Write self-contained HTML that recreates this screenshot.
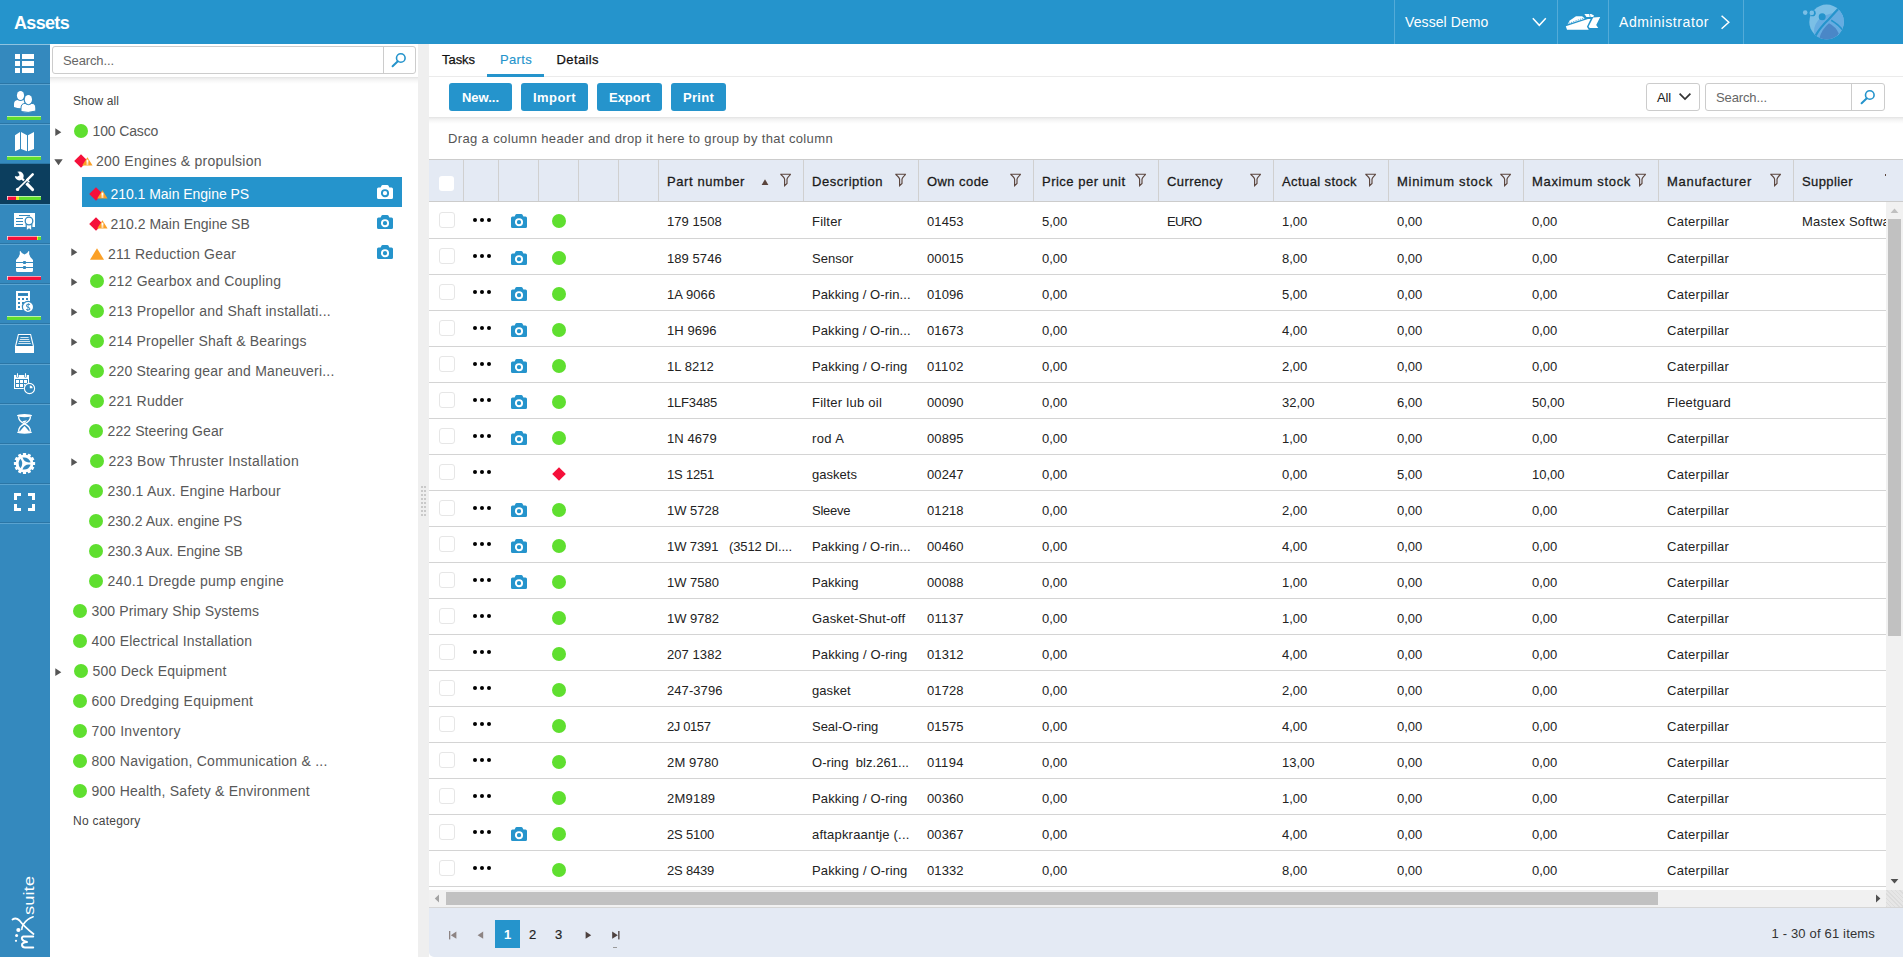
<!DOCTYPE html><html><head><meta charset="utf-8"><title>Assets</title><style>html,body{margin:0;padding:0}body{width:1903px;height:957px;overflow:hidden;position:relative;background:#fff;font-family:"Liberation Sans",sans-serif}
body div,body svg,body span.t{position:absolute;display:block}
span.t{white-space:pre;}</style></head><body><div style="left:0px;top:0px;width:1903px;height:44px;background:#2594cc"></div><span class="t" style="left:14px;top:9.26px;height:29px;line-height:29px;font-size:18px;color:#fff;font-weight:bold;letter-spacing:-0.674px;">Assets</span><div style="left:1394px;top:0px;width:1px;height:44px;background:#53abd8"></div><div style="left:1557px;top:0px;width:1px;height:44px;background:#53abd8"></div><div style="left:1608px;top:0px;width:1px;height:44px;background:#53abd8"></div><div style="left:1743px;top:0px;width:1px;height:44px;background:#53abd8"></div><span class="t" style="left:1405px;top:11.15px;height:22px;line-height:22px;font-size:14px;color:#fff;letter-spacing:0.092px;">Vessel Demo</span><svg style="left:1531px;top:16px;" width="17" height="12" viewBox="0 0 17 12"><path d="M1.8 2.2 L8.3 9.3 L14.8 2.2" fill="none" stroke="#fff" stroke-width="1.5"/></svg><svg style="left:1560px;top:8px;" width="46" height="28" viewBox="0 0 46 28"><path d="M5.8 18.2 L28.0 10.9 L30.6 10.9 L26.9 18.8 L28.8 21.8 L7.0 21.8Z" fill="#fff"/><path d="M7.6 16.2 L9.8 12.5 L16.0 8.2 L22.0 8.2 L24.2 9.8 L24.6 10.8Z" fill="#fff"/><path d="M24.4 6.0 L31.2 6.0 L34.0 7.4 L33.2 8.9 L26.4 8.9Z" fill="#fff"/><path d="M33.2 9.4 L40.2 9.0 L36.2 17.0 L38.2 20.0 L29.6 20.0 L28.6 18.6Z" fill="#fff"/><path d="M8.599999999999909 15.399999999999999 L25 9.600000000000001" stroke="#2594cc" stroke-width="1" stroke-dasharray="1.3 1.1" fill="none" opacity="0.75"/><path d="M29.40000000000009 6 L30.200000000000045 9" stroke="#2594cc" stroke-width="0.8" opacity="0.8"/></svg><span class="t" style="left:1619px;top:11.15px;height:22px;line-height:22px;font-size:14px;color:#fff;letter-spacing:0.579px;">Administrator</span><svg style="left:1719px;top:14px;" width="13" height="17" viewBox="0 0 13 17"><path d="M2.6 1.8 L9.8 8.3 L2.6 14.8" fill="none" stroke="#fff" stroke-width="1.5"/></svg><svg style="left:1798px;top:2px;" width="60" height="42" viewBox="0 0 60 42"><defs><clipPath id="lc"><circle cx="28.59999999999991" cy="19.9" r="17.3"/></clipPath></defs><g clip-path="url(#lc)"><rect x="0" y="0" width="60" height="42" fill="#7bbfe6"/><path d="M41.0 6.0 Q26.0 17.0 17.0 34.0 L17.0 43.0 L52.0 43.0 L52.0 2.0Z" fill="#66ace1"/><path d="M16.6 33.0 Q14.5 25.5 20.0 18.5 Q26.0 12.5 37.0 10.8 L41.0 6.0 Q26.0 17.0 17.0 34.0Z" fill="#66ace1"/><path d="M31.0 21.3 Q38.0 25.0 40.8 31.5 Q36.0 39.0 28.0 38.0 Q24.0 37.8 21.3 36.2 Q24.0 27.0 31.0 21.3Z" fill="#4a87c7"/><path d="M40.8 6.2 Q36.0 11.5 30.5 17.5 Q22.0 25.5 17.2 34.2" stroke="#2594cc" stroke-width="2.2" fill="none"/><path d="M33.2 18.2 Q40.0 22.0 45.8 29.2" stroke="#2594cc" stroke-width="1.7" fill="none"/><circle cx="24.2" cy="14.7" r="3.5" fill="#2594cc"/><circle cx="14.6" cy="11.2" r="3.1" fill="#2594cc"/></g><circle cx="7.2" cy="10.6" r="2.3" fill="#7bbfe6"/><circle cx="13.8" cy="10.9" r="2.3" fill="#7bbfe6"/></svg><div style="left:0px;top:44px;width:50px;height:913px;background:#3489be"></div><div style="left:0px;top:164px;width:50px;height:40px;background:#0c3e5e"></div><div style="left:0px;top:44px;width:50px;height:1px;background:#8fc3e0"></div><div style="left:0px;top:83px;width:50px;height:1px;background:#2b76a6"></div><div style="left:0px;top:84px;width:50px;height:1px;background:#5aa3d0"></div><div style="left:0px;top:123px;width:50px;height:1px;background:#2b76a6"></div><div style="left:0px;top:124px;width:50px;height:1px;background:#5aa3d0"></div><div style="left:0px;top:163px;width:50px;height:1px;background:#2b76a6"></div><div style="left:0px;top:204px;width:50px;height:1px;background:#5aa3d0"></div><div style="left:0px;top:243px;width:50px;height:1px;background:#2b76a6"></div><div style="left:0px;top:244px;width:50px;height:1px;background:#5aa3d0"></div><div style="left:0px;top:283px;width:50px;height:1px;background:#2b76a6"></div><div style="left:0px;top:284px;width:50px;height:1px;background:#5aa3d0"></div><div style="left:0px;top:323px;width:50px;height:1px;background:#2b76a6"></div><div style="left:0px;top:324px;width:50px;height:1px;background:#5aa3d0"></div><div style="left:0px;top:363px;width:50px;height:1px;background:#2b76a6"></div><div style="left:0px;top:364px;width:50px;height:1px;background:#5aa3d0"></div><div style="left:0px;top:403px;width:50px;height:1px;background:#2b76a6"></div><div style="left:0px;top:404px;width:50px;height:1px;background:#5aa3d0"></div><div style="left:0px;top:443px;width:50px;height:1px;background:#2b76a6"></div><div style="left:0px;top:444px;width:50px;height:1px;background:#5aa3d0"></div><div style="left:0px;top:483px;width:50px;height:1px;background:#2b76a6"></div><div style="left:0px;top:484px;width:50px;height:1px;background:#5aa3d0"></div><div style="left:0px;top:522px;width:50px;height:1px;background:#2b76a6"></div><div style="left:0px;top:523px;width:50px;height:1px;background:#5aa3d0"></div><svg style="left:0px;top:44px;" width="50" height="480" viewBox="0 0 50 480"><rect x="15" y="10" width="5" height="5" fill="#fff"/><rect x="22" y="10" width="12" height="5" fill="#fff"/><rect x="15" y="17" width="5" height="5" fill="#fff"/><rect x="22" y="17" width="12" height="5" fill="#fff"/><rect x="15" y="24" width="5" height="5" fill="#fff"/><rect x="22" y="24" width="12" height="5" fill="#fff"/><path d="M14 63 L14 60 Q14 56.5 17.5 56 Q20.5 58 23.5 56 L25 56.400000000000006 L25 64 Q19 65 14 63Z" fill="#fff"/><ellipse cx="20.5" cy="51.5" rx="3.6" ry="4.6" fill="#fff"/><ellipse cx="28.4" cy="55.599999999999994" rx="4.8" ry="5.8" fill="#3489be"/><path d="M21 67.5 L21 64 Q21 59.5 25 59.400000000000006 Q28.4 62 31.8 59.400000000000006 Q35.8 59.5 35.8 64 L35.8 67 Q28 69.5 21 67.5Z" fill="#fff" stroke="#3489be" stroke-width="1"/><ellipse cx="28.4" cy="55.599999999999994" rx="3.6" ry="4.6" fill="#fff"/><path d="M15 91.19999999999999 L20 88 L20 105 L15 107.19999999999999Z M21 88 L27 91.19999999999999 L27 107.19999999999999 L21 105Z M28 91.19999999999999 L34 88 L34 105 L28 107.19999999999999Z" fill="#fff"/><path d="M21 133.5 L25.2 137.8" stroke="#fff" stroke-width="2.2"/><path d="M27 139.8 L32.5 145.5" stroke="#fff" stroke-width="3.2" stroke-linecap="round"/><path d="M31 132 L19.5 143.5" stroke="#0c3e5e" stroke-width="3.6"/><path d="M32.7 130.3 L27.2 135.8" stroke="#fff" stroke-width="2.5" stroke-linecap="round"/><path d="M28.5 134.5 L17.8 145.2" stroke="#fff" stroke-width="1.7"/><circle cx="17.6" cy="145.4" r="1.7" fill="#fff"/><path d="M26.6 135.4 L29.4 138.2" stroke="#fff" stroke-width="1.4"/><circle cx="19.3" cy="132" r="4.4" fill="#fff"/><path d="M13.5 127.5 L18.2 128.2 L19.6 131.2 L17.6 132.6 L14.2 132 Z" fill="#0c3e5e"/><rect x="14" y="169" width="21" height="14" fill="#fff"/><rect x="19" y="171" width="11" height="1" fill="#3489be"/><rect x="16" y="174" width="7" height="1" fill="#3489be"/><rect x="16" y="177" width="7" height="1" fill="#3489be"/><rect x="16" y="180" width="7" height="1" fill="#3489be"/><path d="M26.2 180 L26.2 187 L29 185 L31.8 187 L31.8 180Z" fill="#fff" stroke="#3489be" stroke-width="1.2"/><circle cx="29" cy="177" r="3.8" fill="#fff" stroke="#3489be" stroke-width="1.3"/><path d="M20.4 207 Q19.4 207.4 19.8 208.4 Q20.4 212 16 216 L16 226.5 Q16 228 17.5 228 L31.5 228 Q33 228 33 226.5 L33 216 Q28.6 212 29.2 208.4 Q29.6 207.4 28.6 207 Q27 210.2 24.5 210.4 Q22 210.2 20.4 207Z" fill="#fff"/><rect x="16" y="218" width="17" height="1" fill="#3489be"/><rect x="16" y="223" width="17" height="1" fill="#3489be"/><rect x="23" y="217" width="3" height="3" rx="0.8" fill="#3489be"/><rect x="23" y="222" width="3" height="3" rx="0.8" fill="#3489be"/><rect x="16" y="247" width="14" height="19" fill="#fff"/><rect x="18" y="249" width="10" height="3" fill="#3489be"/><rect x="19" y="250" width="8" height="1" fill="#2f7fb4"/><rect x="18" y="254" width="2" height="2" fill="#3489be"/><rect x="22" y="254" width="2" height="2" fill="#3489be"/><rect x="26" y="254" width="2" height="2" fill="#3489be"/><rect x="18" y="258" width="2" height="2" fill="#3489be"/><rect x="22" y="258" width="2" height="2" fill="#3489be"/><rect x="26" y="258" width="2" height="2" fill="#3489be"/><rect x="18" y="262" width="2" height="2" fill="#3489be"/><rect x="22" y="262" width="2" height="2" fill="#3489be"/><rect x="26" y="262" width="2" height="2" fill="#3489be"/><circle cx="28" cy="263" r="5.6" fill="#fff" stroke="#3489be" stroke-width="1.2"/><path d="M30 260.6 Q27.2 259.6 26.6 261.4 Q26.4 262.6 28.2 263.2 Q30.2 263.9 29.8 265.3 Q29 266.6 26.2 265.6" stroke="#3489be" stroke-width="1.1" fill="none"/><path d="M28.6 259.2 L27.6 267" stroke="#3489be" stroke-width="0.7"/><path d="M18.4 290.5 L30.6 290.5 L33.4 302 L15.6 302Z" fill="none" stroke="#fff" stroke-width="1.1"/><rect x="15" y="302" width="19" height="7" fill="#fff"/><rect x="20.4" y="293.1" width="8.200000000000003" height="0.8" fill="#fff"/><rect x="19.8" y="295.1" width="9.399999999999999" height="0.8" fill="#fff"/><rect x="19" y="297.1" width="11" height="0.8" fill="#fff"/><rect x="18.2" y="299.1" width="12.600000000000001" height="0.8" fill="#fff"/><path d="M19 291 L30 291 L30.4 292.4 L18.6 292.4Z" fill="#2579b0"/><rect x="16.4" y="301" width="16.2" height="1" fill="#2579b0"/><rect x="14" y="331" width="15" height="14" fill="#fff"/><rect x="15" y="335" width="13" height="9" fill="#3489be"/><rect x="16" y="336" width="3" height="3" fill="#fff"/><rect x="20" y="336" width="3" height="3" fill="#fff"/><rect x="24" y="336" width="3" height="3" fill="#fff"/><rect x="16" y="340" width="3" height="3" fill="#fff"/><rect x="20" y="340" width="3" height="3" fill="#fff"/><rect x="24" y="340" width="3" height="3" fill="#fff"/><rect x="16.3" y="328.6" width="2.4" height="5" rx="1.2" fill="#3489be"/><rect x="17.0" y="329" width="1" height="4" rx="0.5" fill="#fff"/><rect x="24.3" y="328.6" width="2.4" height="5" rx="1.2" fill="#3489be"/><rect x="25.0" y="329" width="1" height="4" rx="0.5" fill="#fff"/><circle cx="29.5" cy="344.5" r="5.8" fill="#3489be"/><circle cx="29.5" cy="344.5" r="5.1" fill="none" stroke="#fff" stroke-width="1.1"/><path d="M29.8 344.2 L29.8 341.6 A2.8 2.8 0 0 1 32.6 344.2Z" fill="#fff"/><ellipse cx="24.5" cy="371.6" rx="7.6" ry="1.7" fill="#fff"/><ellipse cx="24.5" cy="388.2" rx="7.6" ry="1.5" fill="#fff"/><path d="M18.6 372.5 Q18.4 377 24.5 379.8 Q30.6 382.5 30.4 387.5" fill="none" stroke="#fff" stroke-width="1.3"/><path d="M30.4 372.5 Q30.6 377 24.5 379.8 Q18.4 382.5 18.6 387.5" fill="none" stroke="#fff" stroke-width="1.3"/><path d="M19.8 387.5 Q22.5 384 24.5 382 Q26.5 384 29.2 387.5Z" fill="#fff"/><path d="M22.2 377.2 L27 376.2 L24.5 379Z" fill="#fff"/><rect x="22.9" y="408.9" width="3.2" height="4" rx="0.5" fill="#fff" transform="rotate(0 24.5 419.5)"/><rect x="22.9" y="408.9" width="3.2" height="4" rx="0.5" fill="#fff" transform="rotate(30 24.5 419.5)"/><rect x="22.9" y="408.9" width="3.2" height="4" rx="0.5" fill="#fff" transform="rotate(60 24.5 419.5)"/><rect x="22.9" y="408.9" width="3.2" height="4" rx="0.5" fill="#fff" transform="rotate(90 24.5 419.5)"/><rect x="22.9" y="408.9" width="3.2" height="4" rx="0.5" fill="#fff" transform="rotate(120 24.5 419.5)"/><rect x="22.9" y="408.9" width="3.2" height="4" rx="0.5" fill="#fff" transform="rotate(150 24.5 419.5)"/><rect x="22.9" y="408.9" width="3.2" height="4" rx="0.5" fill="#fff" transform="rotate(180 24.5 419.5)"/><rect x="22.9" y="408.9" width="3.2" height="4" rx="0.5" fill="#fff" transform="rotate(210 24.5 419.5)"/><rect x="22.9" y="408.9" width="3.2" height="4" rx="0.5" fill="#fff" transform="rotate(240 24.5 419.5)"/><rect x="22.9" y="408.9" width="3.2" height="4" rx="0.5" fill="#fff" transform="rotate(270 24.5 419.5)"/><rect x="22.9" y="408.9" width="3.2" height="4" rx="0.5" fill="#fff" transform="rotate(300 24.5 419.5)"/><rect x="22.9" y="408.9" width="3.2" height="4" rx="0.5" fill="#fff" transform="rotate(330 24.5 419.5)"/><circle cx="24.5" cy="419.5" r="8.9" fill="#fff"/><path d="M20.4 414.8 Q16.6 419.5 20.4 424.2 Q24.3 419.5 20.4 414.8Z" fill="#3489be" transform="rotate(0 24.5 419.5)"/><path d="M20.4 414.8 Q16.6 419.5 20.4 424.2 Q24.3 419.5 20.4 414.8Z" fill="#3489be" transform="rotate(120 24.5 419.5)"/><path d="M20.4 414.8 Q16.6 419.5 20.4 424.2 Q24.3 419.5 20.4 414.8Z" fill="#3489be" transform="rotate(240 24.5 419.5)"/><path d="M14 449 h7 v3 h-4 v4 h-3Z M35 449 h-7 v3 h4 v4 h3Z M14 467 h7 v-3 h-4 v-4 h-3Z M35 467 h-7 v-3 h4 v-4 h3Z" fill="#fff"/></svg><div style="left:7px;top:116px;width:34px;height:4px;background:#5fdf2f"></div><div style="left:7px;top:116px;width:34px;height:1px;background:rgba(255,255,255,0.6)"></div><div style="left:7px;top:156px;width:34px;height:4px;background:#5fdf2f"></div><div style="left:7px;top:156px;width:34px;height:1px;background:rgba(255,255,255,0.6)"></div><div style="left:7px;top:196px;width:9px;height:4px;background:#f5103a"></div><div style="left:16px;top:196px;width:3px;height:4px;background:#f3e61c"></div><div style="left:19px;top:196px;width:22px;height:4px;background:#5fdf2f"></div><div style="left:7px;top:196px;width:34px;height:1px;background:rgba(255,255,255,0.6)"></div><div style="left:7px;top:196px;width:1px;height:4px;background:rgba(255,255,255,0.7)"></div><div style="left:7px;top:236px;width:30px;height:4px;background:#f5103a"></div><div style="left:37px;top:236px;width:1px;height:4px;background:#f3e61c"></div><div style="left:38px;top:236px;width:3px;height:4px;background:#5fdf2f"></div><div style="left:7px;top:236px;width:34px;height:1px;background:rgba(255,255,255,0.6)"></div><div style="left:7px;top:236px;width:1px;height:4px;background:rgba(255,255,255,0.7)"></div><div style="left:7px;top:276px;width:34px;height:4px;background:#f5103a"></div><div style="left:7px;top:276px;width:34px;height:1px;background:rgba(255,255,255,0.6)"></div><div style="left:7px;top:276px;width:1px;height:4px;background:rgba(255,255,255,0.7)"></div><div style="left:7px;top:316px;width:34px;height:4px;background:#5fdf2f"></div><div style="left:7px;top:316px;width:34px;height:1px;background:rgba(255,255,255,0.6)"></div><svg style="left:0;top:0" width="50" height="957" viewBox="0 0 50 957"><text x="0" y="0" transform="translate(34 915) rotate(-90)" font-family="Liberation Sans" font-size="15.5" fill="#fff" textLength="39" lengthAdjust="spacingAndGlyphs" style="font-weight:normal">suite</text><path d="M12.5 919.5 Q16 917 19.5 920.5 Q24 926.5 33.5 934" stroke="#fff" stroke-width="1.8" fill="none" stroke-linecap="round"/><path d="M33.2 916.8 Q27 919 23.6 924 Q21.8 927 21.8 929.5" stroke="#fff" stroke-width="1.5" fill="none" stroke-linecap="round"/><circle cx="18.4" cy="930" r="2.1" fill="#fff"/><circle cx="16.6" cy="935.6" r="1.5" fill="#fff"/><circle cx="16" cy="940.8" r="1.1" fill="#fff"/><path d="M33.2 936.6 L23.4 936.6 Q21.4 937 22 939 Q22.6 941 27 942 Q21.6 942.6 22 945 Q22.4 947.4 25 947.4 L33.2 947.4" stroke="#fff" stroke-width="2" fill="none" stroke-linecap="round" stroke-linejoin="round"/></svg><div style="left:50px;top:44px;width:368px;height:913px;background:#fff"></div><div style="left:52px;top:46px;width:364px;height:28px;border:1px solid #ccc;border-radius:3px;box-sizing:border-box;background:#fff"></div><div style="left:383px;top:47px;width:1px;height:26px;background:#ccc"></div><span class="t" style="left:63px;top:50.00px;height:21px;line-height:21px;font-size:13px;color:#666;letter-spacing:-0.126px;">Search...</span><svg style="left:391px;top:52px;" width="16" height="16" viewBox="0 0 16 16"><circle cx="9.8" cy="6" r="4.3" fill="none" stroke="#2594cc" stroke-width="1.6"/><path d="M6.8 9.2 L1.6 14.2" stroke="#2594cc" stroke-width="2" stroke-linecap="round"/></svg><div style="left:50px;top:77px;width:368px;height:7px;background:linear-gradient(#e1e1e1 0,#ebebeb 15%,#f1f1f1 30%,#f6f6f6 50%,#fbfbfb 75%,#fff 100%)"></div><span class="t" style="left:73px;top:92.34px;height:19px;line-height:19px;font-size:12px;color:#444;letter-spacing:0.080px;">Show all</span><span class="t" style="left:73px;top:812.34px;height:19px;line-height:19px;font-size:12px;color:#444;letter-spacing:0.257px;">No category</span><svg style="left:55px;top:128px;" width="7" height="9" viewBox="0 0 7 9"><path d="M0.3 0.3 L6.3 4.2 L0.3 8.1Z" fill="#555"/></svg><div style="left:74px;top:124px;width:14px;height:14px;background:#5fdf2f;border-radius:50%"></div><span class="t" style="left:92.5px;top:120.15px;height:22px;line-height:22px;font-size:14px;color:#585858;letter-spacing:-0.133px;">100 Casco</span><svg style="left:54px;top:159px;" width="9" height="7" viewBox="0 0 9 7"><path d="M0.3 0.3 L8.7 0.3 L4.5 6.3Z" fill="#555"/></svg><svg style="left:74px;top:154px;" width="14" height="14" viewBox="0 0 14 14"><path d="M7 0.2 L13.8 7 L7 13.8 L0.2 7Z" fill="#f5103a"/></svg><svg style="left:82px;top:157px;" width="11" height="9" viewBox="0 0 11 9"><path d="M5.4 0.3 L10.6 8.4 L0.2 8.4Z" fill="#fba026"/><rect x="4.5" y="2.6" width="1.9" height="3.2" fill="#fff"/><rect x="4.5" y="6.3" width="1.9" height="1.3" fill="#fff"/></svg><span class="t" style="left:96px;top:150.15px;height:22px;line-height:22px;font-size:14px;color:#585858;letter-spacing:0.258px;">200 Engines &amp; propulsion</span><div style="left:82px;top:177px;width:320px;height:30px;background:#2594cc"></div><svg style="left:89px;top:187px;" width="14" height="14" viewBox="0 0 14 14"><path d="M7 0.2 L13.8 7 L7 13.8 L0.2 7Z" fill="#f5103a"/></svg><svg style="left:97px;top:190px;" width="11" height="9" viewBox="0 0 11 9"><path d="M5.4 0.3 L10.6 8.4 L0.2 8.4Z" fill="#fba026"/><rect x="4.5" y="2.6" width="1.9" height="3.2" fill="#fff"/><rect x="4.5" y="6.3" width="1.9" height="1.3" fill="#fff"/></svg><span class="t" style="left:110.5px;top:183.15px;height:22px;line-height:22px;font-size:14px;color:#fff;letter-spacing:-0.033px;">210.1 Main Engine PS</span><svg style="left:377px;top:185px;" width="16" height="14" viewBox="0 0 16 14"><path d="M1.5 2.6 L3.6 2.6 L4.6 0.6 Q4.9 0 5.6 0 L10.4 0 Q11.1 0 11.4 0.6 L12.4 2.6 L14.5 2.6 Q16 2.6 16 4.1 L16 12.5 Q16 14 14.5 14 L1.5 14 Q0 14 0 12.5 L0 4.1 Q0 2.6 1.5 2.6Z" fill="#fff"/><circle cx="8" cy="8.2" r="3.1" fill="none" stroke="#2594cc" stroke-width="1.9"/></svg><svg style="left:89px;top:217px;" width="14" height="14" viewBox="0 0 14 14"><path d="M7 0.2 L13.8 7 L7 13.8 L0.2 7Z" fill="#f5103a"/></svg><svg style="left:97px;top:220px;" width="11" height="9" viewBox="0 0 11 9"><path d="M5.4 0.3 L10.6 8.4 L0.2 8.4Z" fill="#fba026"/><rect x="4.5" y="2.6" width="1.9" height="3.2" fill="#fff"/><rect x="4.5" y="6.3" width="1.9" height="1.3" fill="#fff"/></svg><span class="t" style="left:110.5px;top:213.15px;height:22px;line-height:22px;font-size:14px;color:#585858;letter-spacing:-0.001px;">210.2 Main Engine SB</span><svg style="left:377px;top:215px;" width="16" height="14" viewBox="0 0 16 14"><path d="M1.5 2.6 L3.6 2.6 L4.6 0.6 Q4.9 0 5.6 0 L10.4 0 Q11.1 0 11.4 0.6 L12.4 2.6 L14.5 2.6 Q16 2.6 16 4.1 L16 12.5 Q16 14 14.5 14 L1.5 14 Q0 14 0 12.5 L0 4.1 Q0 2.6 1.5 2.6Z" fill="#2594cc"/><circle cx="8" cy="8.2" r="3.1" fill="none" stroke="#fff" stroke-width="1.9"/></svg><svg style="left:71px;top:248px;" width="7" height="9" viewBox="0 0 7 9"><path d="M0.3 0.3 L6.3 4.2 L0.3 8.1Z" fill="#555"/></svg><svg style="left:90px;top:248px;" width="14" height="12" viewBox="0 0 14 12"><path d="M7 0.3 L14 11.7 L0 11.7Z" fill="#fba026"/></svg><span class="t" style="left:108px;top:243.15px;height:22px;line-height:22px;font-size:14px;color:#585858;letter-spacing:0.211px;">211 Reduction Gear</span><svg style="left:377px;top:245px;" width="16" height="14" viewBox="0 0 16 14"><path d="M1.5 2.6 L3.6 2.6 L4.6 0.6 Q4.9 0 5.6 0 L10.4 0 Q11.1 0 11.4 0.6 L12.4 2.6 L14.5 2.6 Q16 2.6 16 4.1 L16 12.5 Q16 14 14.5 14 L1.5 14 Q0 14 0 12.5 L0 4.1 Q0 2.6 1.5 2.6Z" fill="#2594cc"/><circle cx="8" cy="8.2" r="3.1" fill="none" stroke="#fff" stroke-width="1.9"/></svg><svg style="left:71px;top:278px;" width="7" height="9" viewBox="0 0 7 9"><path d="M0.3 0.3 L6.3 4.2 L0.3 8.1Z" fill="#555"/></svg><div style="left:90px;top:274px;width:14px;height:14px;background:#5fdf2f;border-radius:50%"></div><span class="t" style="left:108.5px;top:270.15px;height:22px;line-height:22px;font-size:14px;color:#585858;letter-spacing:0.225px;">212 Gearbox and Coupling</span><svg style="left:71px;top:308px;" width="7" height="9" viewBox="0 0 7 9"><path d="M0.3 0.3 L6.3 4.2 L0.3 8.1Z" fill="#555"/></svg><div style="left:90px;top:304px;width:14px;height:14px;background:#5fdf2f;border-radius:50%"></div><span class="t" style="left:108.5px;top:300.15px;height:22px;line-height:22px;font-size:14px;color:#585858;letter-spacing:0.250px;">213 Propellor and Shaft installati...</span><svg style="left:71px;top:338px;" width="7" height="9" viewBox="0 0 7 9"><path d="M0.3 0.3 L6.3 4.2 L0.3 8.1Z" fill="#555"/></svg><div style="left:90px;top:334px;width:14px;height:14px;background:#5fdf2f;border-radius:50%"></div><span class="t" style="left:108.5px;top:330.15px;height:22px;line-height:22px;font-size:14px;color:#585858;letter-spacing:0.196px;">214 Propeller Shaft &amp; Bearings</span><svg style="left:71px;top:368px;" width="7" height="9" viewBox="0 0 7 9"><path d="M0.3 0.3 L6.3 4.2 L0.3 8.1Z" fill="#555"/></svg><div style="left:90px;top:364px;width:14px;height:14px;background:#5fdf2f;border-radius:50%"></div><span class="t" style="left:108.5px;top:360.15px;height:22px;line-height:22px;font-size:14px;color:#585858;letter-spacing:0.191px;">220 Stearing gear and Maneuveri...</span><svg style="left:71px;top:398px;" width="7" height="9" viewBox="0 0 7 9"><path d="M0.3 0.3 L6.3 4.2 L0.3 8.1Z" fill="#555"/></svg><div style="left:90px;top:394px;width:14px;height:14px;background:#5fdf2f;border-radius:50%"></div><span class="t" style="left:108.5px;top:390.15px;height:22px;line-height:22px;font-size:14px;color:#585858;letter-spacing:0.208px;">221 Rudder</span><div style="left:89px;top:424px;width:14px;height:14px;background:#5fdf2f;border-radius:50%"></div><span class="t" style="left:107.5px;top:420.15px;height:22px;line-height:22px;font-size:14px;color:#585858;letter-spacing:0.100px;">222 Steering Gear</span><svg style="left:71px;top:458px;" width="7" height="9" viewBox="0 0 7 9"><path d="M0.3 0.3 L6.3 4.2 L0.3 8.1Z" fill="#555"/></svg><div style="left:90px;top:454px;width:14px;height:14px;background:#5fdf2f;border-radius:50%"></div><span class="t" style="left:108.5px;top:450.15px;height:22px;line-height:22px;font-size:14px;color:#585858;letter-spacing:0.326px;">223 Bow Thruster Installation</span><div style="left:89px;top:484px;width:14px;height:14px;background:#5fdf2f;border-radius:50%"></div><span class="t" style="left:107.5px;top:480.15px;height:22px;line-height:22px;font-size:14px;color:#585858;letter-spacing:0.215px;">230.1 Aux. Engine Harbour</span><div style="left:89px;top:514px;width:14px;height:14px;background:#5fdf2f;border-radius:50%"></div><span class="t" style="left:107.5px;top:510.15px;height:22px;line-height:22px;font-size:14px;color:#585858;letter-spacing:0.002px;">230.2 Aux. engine PS</span><div style="left:89px;top:544px;width:14px;height:14px;background:#5fdf2f;border-radius:50%"></div><span class="t" style="left:107.5px;top:540.15px;height:22px;line-height:22px;font-size:14px;color:#585858;letter-spacing:-0.047px;">230.3 Aux. Engine SB</span><div style="left:89px;top:574px;width:14px;height:14px;background:#5fdf2f;border-radius:50%"></div><span class="t" style="left:107.5px;top:570.15px;height:22px;line-height:22px;font-size:14px;color:#585858;letter-spacing:0.285px;">240.1 Dregde pump engine</span><div style="left:73px;top:604px;width:14px;height:14px;background:#5fdf2f;border-radius:50%"></div><span class="t" style="left:91.5px;top:600.15px;height:22px;line-height:22px;font-size:14px;color:#585858;letter-spacing:0.113px;">300 Primary Ship Systems</span><div style="left:73px;top:634px;width:14px;height:14px;background:#5fdf2f;border-radius:50%"></div><span class="t" style="left:91.5px;top:630.15px;height:22px;line-height:22px;font-size:14px;color:#585858;letter-spacing:0.220px;">400 Electrical Installation</span><svg style="left:55px;top:668px;" width="7" height="9" viewBox="0 0 7 9"><path d="M0.3 0.3 L6.3 4.2 L0.3 8.1Z" fill="#555"/></svg><div style="left:74px;top:664px;width:14px;height:14px;background:#5fdf2f;border-radius:50%"></div><span class="t" style="left:92.5px;top:660.15px;height:22px;line-height:22px;font-size:14px;color:#585858;letter-spacing:0.234px;">500 Deck Equipment</span><div style="left:73px;top:694px;width:14px;height:14px;background:#5fdf2f;border-radius:50%"></div><span class="t" style="left:91.5px;top:690.15px;height:22px;line-height:22px;font-size:14px;color:#585858;letter-spacing:0.314px;">600 Dredging Equipment</span><div style="left:73px;top:724px;width:14px;height:14px;background:#5fdf2f;border-radius:50%"></div><span class="t" style="left:91.5px;top:720.15px;height:22px;line-height:22px;font-size:14px;color:#585858;letter-spacing:0.346px;">700 Inventory</span><div style="left:73px;top:754px;width:14px;height:14px;background:#5fdf2f;border-radius:50%"></div><span class="t" style="left:91.5px;top:750.15px;height:22px;line-height:22px;font-size:14px;color:#585858;letter-spacing:0.255px;">800 Navigation, Communication &amp; ...</span><div style="left:73px;top:784px;width:14px;height:14px;background:#5fdf2f;border-radius:50%"></div><span class="t" style="left:91.5px;top:780.15px;height:22px;line-height:22px;font-size:14px;color:#585858;letter-spacing:0.233px;">900 Health, Safety &amp; Environment</span><div style="left:418px;top:44px;width:11px;height:913px;background:#efefef"></div><svg style="left:0;top:0" width="430" height="530" viewBox="0 0 430 530"><rect x="421" y="486" width="2" height="2" fill="#c9c9c9"/><rect x="424" y="486" width="2" height="2" fill="#c9c9c9"/><rect x="421" y="490" width="2" height="2" fill="#c9c9c9"/><rect x="424" y="490" width="2" height="2" fill="#c9c9c9"/><rect x="421" y="494" width="2" height="2" fill="#c9c9c9"/><rect x="424" y="494" width="2" height="2" fill="#c9c9c9"/><rect x="421" y="498" width="2" height="2" fill="#c9c9c9"/><rect x="424" y="498" width="2" height="2" fill="#c9c9c9"/><rect x="421" y="502" width="2" height="2" fill="#c9c9c9"/><rect x="424" y="502" width="2" height="2" fill="#c9c9c9"/><rect x="421" y="506" width="2" height="2" fill="#c9c9c9"/><rect x="424" y="506" width="2" height="2" fill="#c9c9c9"/><rect x="421" y="510" width="2" height="2" fill="#c9c9c9"/><rect x="424" y="510" width="2" height="2" fill="#c9c9c9"/><rect x="421" y="514" width="2" height="2" fill="#c9c9c9"/><rect x="424" y="514" width="2" height="2" fill="#c9c9c9"/></svg><div style="left:429px;top:76px;width:1474px;height:1px;background:#ebebeb"></div><span class="t" style="left:442px;top:49.00px;height:21px;line-height:21px;font-size:13px;color:#111;-webkit-text-stroke:0.25px #111;letter-spacing:-0.047px;">Tasks</span><span class="t" style="left:500px;top:49.00px;height:21px;line-height:21px;font-size:13px;color:#2594cc;-webkit-text-stroke:0.12px #2594cc;letter-spacing:0.331px;">Parts</span><span class="t" style="left:556.5px;top:49.00px;height:21px;line-height:21px;font-size:13px;color:#111;-webkit-text-stroke:0.25px #111;letter-spacing:0.393px;">Details</span><div style="left:487px;top:74px;width:57px;height:3px;background:#2594cc"></div><div style="left:449px;top:83px;width:63px;height:28px;background:#2594cc;border-radius:3px"></div><span class="t" style="left:462px;top:87.00px;height:21px;line-height:21px;font-size:13px;color:#fff;font-weight:bold;letter-spacing:-0.016px;">New...</span><div style="left:521px;top:83px;width:67px;height:28px;background:#2594cc;border-radius:3px"></div><span class="t" style="left:533px;top:87.00px;height:21px;line-height:21px;font-size:13px;color:#fff;font-weight:bold;letter-spacing:0.424px;">Import</span><div style="left:597px;top:83px;width:65px;height:28px;background:#2594cc;border-radius:3px"></div><span class="t" style="left:609px;top:87.00px;height:21px;line-height:21px;font-size:13px;color:#fff;font-weight:bold;letter-spacing:-0.029px;">Export</span><div style="left:671px;top:83px;width:55px;height:28px;background:#2594cc;border-radius:3px"></div><span class="t" style="left:683px;top:87.00px;height:21px;line-height:21px;font-size:13px;color:#fff;font-weight:bold;letter-spacing:0.275px;">Print</span><div style="left:1646px;top:83px;width:54px;height:28px;border:1px solid #ccc;border-radius:3px;box-sizing:border-box;background:#fff"></div><span class="t" style="left:1657px;top:87.00px;height:21px;line-height:21px;font-size:13px;color:#222;letter-spacing:-0.151px;">All</span><svg style="left:1678px;top:91px;" width="14" height="11" viewBox="0 0 14 11"><path d="M1.6 2.6 L7 8 L12.4 2.6" fill="none" stroke="#333" stroke-width="1.7"/></svg><div style="left:1705px;top:83px;width:180px;height:28px;border:1px solid #ccc;border-radius:3px;box-sizing:border-box;background:#fff"></div><div style="left:1851px;top:84px;width:1px;height:26px;background:#ccc"></div><span class="t" style="left:1716px;top:87.00px;height:21px;line-height:21px;font-size:13px;color:#666;letter-spacing:-0.126px;">Search...</span><svg style="left:1860px;top:89px;" width="16" height="16" viewBox="0 0 16 16"><circle cx="9.8" cy="6" r="4.3" fill="none" stroke="#2594cc" stroke-width="1.6"/><path d="M6.8 9.2 L1.6 14.2" stroke="#2594cc" stroke-width="2" stroke-linecap="round"/></svg><div style="left:429px;top:117px;width:1474px;height:7px;background:linear-gradient(#e1e1e1 0,#ebebeb 15%,#f1f1f1 30%,#f6f6f6 50%,#fbfbfb 75%,#fff 100%)"></div><span class="t" style="left:448px;top:128.00px;height:21px;line-height:21px;font-size:13px;color:#555;letter-spacing:0.364px;">Drag a column header and drop it here to group by that column</span><div style="left:429px;top:159px;width:1474px;height:1px;background:#cccccc"></div><div style="left:429px;top:160px;width:1474px;height:41px;background:#e4eaf4"></div><div style="left:429px;top:201px;width:1474px;height:1px;background:#cccccc"></div><div style="left:463px;top:160px;width:1px;height:41px;background:#d0d0d0"></div><div style="left:498px;top:160px;width:1px;height:41px;background:#d0d0d0"></div><div style="left:538px;top:160px;width:1px;height:41px;background:#d0d0d0"></div><div style="left:578px;top:160px;width:1px;height:41px;background:#d0d0d0"></div><div style="left:618px;top:160px;width:1px;height:41px;background:#d0d0d0"></div><div style="left:658px;top:160px;width:1px;height:41px;background:#d0d0d0"></div><div style="left:803px;top:160px;width:1px;height:41px;background:#d0d0d0"></div><div style="left:918px;top:160px;width:1px;height:41px;background:#d0d0d0"></div><div style="left:1033px;top:160px;width:1px;height:41px;background:#d0d0d0"></div><div style="left:1158px;top:160px;width:1px;height:41px;background:#d0d0d0"></div><div style="left:1273px;top:160px;width:1px;height:41px;background:#d0d0d0"></div><div style="left:1388px;top:160px;width:1px;height:41px;background:#d0d0d0"></div><div style="left:1523px;top:160px;width:1px;height:41px;background:#d0d0d0"></div><div style="left:1658px;top:160px;width:1px;height:41px;background:#d0d0d0"></div><div style="left:1793px;top:160px;width:1px;height:41px;background:#d0d0d0"></div><div style="left:439px;top:176px;width:15px;height:15px;background:#fff;border-radius:3px"></div><span class="t" style="left:667px;top:170.50px;height:21px;line-height:21px;font-size:13px;color:#1a1a1a;-webkit-text-stroke:0.28px #1a1a1a;letter-spacing:0.587px;">Part number</span><svg style="left:780px;top:173px;" width="12" height="14" viewBox="0 0 12 14"><path d="M0.3 1.2 L10.9 1.2 M0.6 1.3 Q4.4 4.6 4.6 6.4 L4.6 12.6 L7 10.4 L7 6.4 Q7.2 4.6 10.6 1.3" fill="none" stroke="#5a443c" stroke-width="1.15"/></svg><span class="t" style="left:812px;top:170.50px;height:21px;line-height:21px;font-size:13px;color:#1a1a1a;-webkit-text-stroke:0.28px #1a1a1a;letter-spacing:0.543px;">Description</span><svg style="left:895px;top:173px;" width="12" height="14" viewBox="0 0 12 14"><path d="M0.3 1.2 L10.9 1.2 M0.6 1.3 Q4.4 4.6 4.6 6.4 L4.6 12.6 L7 10.4 L7 6.4 Q7.2 4.6 10.6 1.3" fill="none" stroke="#5a443c" stroke-width="1.15"/></svg><span class="t" style="left:927px;top:170.50px;height:21px;line-height:21px;font-size:13px;color:#1a1a1a;-webkit-text-stroke:0.28px #1a1a1a;letter-spacing:0.432px;">Own code</span><svg style="left:1010px;top:173px;" width="12" height="14" viewBox="0 0 12 14"><path d="M0.3 1.2 L10.9 1.2 M0.6 1.3 Q4.4 4.6 4.6 6.4 L4.6 12.6 L7 10.4 L7 6.4 Q7.2 4.6 10.6 1.3" fill="none" stroke="#5a443c" stroke-width="1.15"/></svg><span class="t" style="left:1042px;top:170.50px;height:21px;line-height:21px;font-size:13px;color:#1a1a1a;-webkit-text-stroke:0.28px #1a1a1a;letter-spacing:0.493px;">Price per unit</span><svg style="left:1135px;top:173px;" width="12" height="14" viewBox="0 0 12 14"><path d="M0.3 1.2 L10.9 1.2 M0.6 1.3 Q4.4 4.6 4.6 6.4 L4.6 12.6 L7 10.4 L7 6.4 Q7.2 4.6 10.6 1.3" fill="none" stroke="#5a443c" stroke-width="1.15"/></svg><span class="t" style="left:1167px;top:170.50px;height:21px;line-height:21px;font-size:13px;color:#1a1a1a;-webkit-text-stroke:0.28px #1a1a1a;letter-spacing:0.406px;">Currency</span><svg style="left:1250px;top:173px;" width="12" height="14" viewBox="0 0 12 14"><path d="M0.3 1.2 L10.9 1.2 M0.6 1.3 Q4.4 4.6 4.6 6.4 L4.6 12.6 L7 10.4 L7 6.4 Q7.2 4.6 10.6 1.3" fill="none" stroke="#5a443c" stroke-width="1.15"/></svg><span class="t" style="left:1282px;top:170.50px;height:21px;line-height:21px;font-size:13px;color:#1a1a1a;-webkit-text-stroke:0.28px #1a1a1a;letter-spacing:0.409px;">Actual stock</span><svg style="left:1365px;top:173px;" width="12" height="14" viewBox="0 0 12 14"><path d="M0.3 1.2 L10.9 1.2 M0.6 1.3 Q4.4 4.6 4.6 6.4 L4.6 12.6 L7 10.4 L7 6.4 Q7.2 4.6 10.6 1.3" fill="none" stroke="#5a443c" stroke-width="1.15"/></svg><span class="t" style="left:1397px;top:170.50px;height:21px;line-height:21px;font-size:13px;color:#1a1a1a;-webkit-text-stroke:0.28px #1a1a1a;letter-spacing:0.716px;">Minimum stock</span><svg style="left:1500px;top:173px;" width="12" height="14" viewBox="0 0 12 14"><path d="M0.3 1.2 L10.9 1.2 M0.6 1.3 Q4.4 4.6 4.6 6.4 L4.6 12.6 L7 10.4 L7 6.4 Q7.2 4.6 10.6 1.3" fill="none" stroke="#5a443c" stroke-width="1.15"/></svg><span class="t" style="left:1532px;top:170.50px;height:21px;line-height:21px;font-size:13px;color:#1a1a1a;-webkit-text-stroke:0.28px #1a1a1a;letter-spacing:0.669px;">Maximum stock</span><svg style="left:1635px;top:173px;" width="12" height="14" viewBox="0 0 12 14"><path d="M0.3 1.2 L10.9 1.2 M0.6 1.3 Q4.4 4.6 4.6 6.4 L4.6 12.6 L7 10.4 L7 6.4 Q7.2 4.6 10.6 1.3" fill="none" stroke="#5a443c" stroke-width="1.15"/></svg><span class="t" style="left:1667px;top:170.50px;height:21px;line-height:21px;font-size:13px;color:#1a1a1a;-webkit-text-stroke:0.28px #1a1a1a;letter-spacing:0.701px;">Manufacturer</span><svg style="left:1770px;top:173px;" width="12" height="14" viewBox="0 0 12 14"><path d="M0.3 1.2 L10.9 1.2 M0.6 1.3 Q4.4 4.6 4.6 6.4 L4.6 12.6 L7 10.4 L7 6.4 Q7.2 4.6 10.6 1.3" fill="none" stroke="#5a443c" stroke-width="1.15"/></svg><span class="t" style="left:1802px;top:170.50px;height:21px;line-height:21px;font-size:13px;color:#1a1a1a;-webkit-text-stroke:0.28px #1a1a1a;letter-spacing:0.412px;">Supplier</span><div style="left:1885px;top:174px;width:1px;height:2px;background:#5a443c"></div><svg style="left:761px;top:179px;" width="8" height="7" viewBox="0 0 8 7"><path d="M4 0.3 L7.4 6 L0.6 6Z" fill="#5a443c"/></svg><div style="left:429px;top:238px;width:1457px;height:1px;background:#d4d4d4"></div><div style="left:439px;top:212px;width:16px;height:16px;border:1px solid #e6e6e6;border-radius:3px;box-sizing:border-box;background:#fff"></div><div style="left:473px;top:218px;width:4px;height:4px;background:#000;border-radius:50%"></div><div style="left:480px;top:218px;width:4px;height:4px;background:#000;border-radius:50%"></div><div style="left:487px;top:218px;width:4px;height:4px;background:#000;border-radius:50%"></div><svg style="left:511px;top:214px;" width="16" height="14" viewBox="0 0 16 14"><path d="M1.5 2.6 L3.6 2.6 L4.6 0.6 Q4.9 0 5.6 0 L10.4 0 Q11.1 0 11.4 0.6 L12.4 2.6 L14.5 2.6 Q16 2.6 16 4.1 L16 12.5 Q16 14 14.5 14 L1.5 14 Q0 14 0 12.5 L0 4.1 Q0 2.6 1.5 2.6Z" fill="#2594cc"/><circle cx="8" cy="8.2" r="3.1" fill="none" stroke="#fff" stroke-width="1.9"/></svg><div style="left:552px;top:214px;width:14px;height:14px;background:#5fdf2f;border-radius:50%"></div><span class="t" style="left:667px;top:211.00px;height:21px;line-height:21px;font-size:13px;color:#222;letter-spacing:0.064px;">179 1508</span><span class="t" style="left:812px;top:211.00px;height:21px;line-height:21px;font-size:13px;color:#222;letter-spacing:0.203px;">Filter</span><span class="t" style="left:927px;top:211.00px;height:21px;line-height:21px;font-size:13px;color:#222;letter-spacing:0.113px;">01453</span><span class="t" style="left:1042px;top:211.00px;height:21px;line-height:21px;font-size:13px;color:#222;letter-spacing:-0.033px;">5,00</span><span class="t" style="left:1167px;top:211.00px;height:21px;line-height:21px;font-size:13px;color:#222;letter-spacing:-0.781px;">EURO</span><span class="t" style="left:1282px;top:211.00px;height:21px;line-height:21px;font-size:13px;color:#222;letter-spacing:-0.033px;">1,00</span><span class="t" style="left:1397px;top:211.00px;height:21px;line-height:21px;font-size:13px;color:#222;letter-spacing:-0.033px;">0,00</span><span class="t" style="left:1532px;top:211.00px;height:21px;line-height:21px;font-size:13px;color:#222;letter-spacing:-0.033px;">0,00</span><span class="t" style="left:1667px;top:211.00px;height:21px;line-height:21px;font-size:13px;color:#222;letter-spacing:0.271px;">Caterpillar</span><span class="t" style="left:1802px;top:211.00px;height:21px;line-height:21px;font-size:13px;color:#222;letter-spacing:0.208px;">Mastex Software</span><div style="left:429px;top:274px;width:1457px;height:1px;background:#d4d4d4"></div><div style="left:439px;top:248px;width:16px;height:16px;border:1px solid #e6e6e6;border-radius:3px;box-sizing:border-box;background:#fff"></div><div style="left:473px;top:254px;width:4px;height:4px;background:#000;border-radius:50%"></div><div style="left:480px;top:254px;width:4px;height:4px;background:#000;border-radius:50%"></div><div style="left:487px;top:254px;width:4px;height:4px;background:#000;border-radius:50%"></div><svg style="left:511px;top:251px;" width="16" height="14" viewBox="0 0 16 14"><path d="M1.5 2.6 L3.6 2.6 L4.6 0.6 Q4.9 0 5.6 0 L10.4 0 Q11.1 0 11.4 0.6 L12.4 2.6 L14.5 2.6 Q16 2.6 16 4.1 L16 12.5 Q16 14 14.5 14 L1.5 14 Q0 14 0 12.5 L0 4.1 Q0 2.6 1.5 2.6Z" fill="#2594cc"/><circle cx="8" cy="8.2" r="3.1" fill="none" stroke="#fff" stroke-width="1.9"/></svg><div style="left:552px;top:251px;width:14px;height:14px;background:#5fdf2f;border-radius:50%"></div><span class="t" style="left:667px;top:248.00px;height:21px;line-height:21px;font-size:13px;color:#222;letter-spacing:0.064px;">189 5746</span><span class="t" style="left:812px;top:248.00px;height:21px;line-height:21px;font-size:13px;color:#222;letter-spacing:0.011px;">Sensor</span><span class="t" style="left:927px;top:248.00px;height:21px;line-height:21px;font-size:13px;color:#222;letter-spacing:0.113px;">00015</span><span class="t" style="left:1042px;top:248.00px;height:21px;line-height:21px;font-size:13px;color:#222;letter-spacing:-0.033px;">0,00</span><span class="t" style="left:1282px;top:248.00px;height:21px;line-height:21px;font-size:13px;color:#222;letter-spacing:-0.033px;">8,00</span><span class="t" style="left:1397px;top:248.00px;height:21px;line-height:21px;font-size:13px;color:#222;letter-spacing:-0.033px;">0,00</span><span class="t" style="left:1532px;top:248.00px;height:21px;line-height:21px;font-size:13px;color:#222;letter-spacing:-0.033px;">0,00</span><span class="t" style="left:1667px;top:248.00px;height:21px;line-height:21px;font-size:13px;color:#222;letter-spacing:0.271px;">Caterpillar</span><div style="left:429px;top:310px;width:1457px;height:1px;background:#d4d4d4"></div><div style="left:439px;top:284px;width:16px;height:16px;border:1px solid #e6e6e6;border-radius:3px;box-sizing:border-box;background:#fff"></div><div style="left:473px;top:290px;width:4px;height:4px;background:#000;border-radius:50%"></div><div style="left:480px;top:290px;width:4px;height:4px;background:#000;border-radius:50%"></div><div style="left:487px;top:290px;width:4px;height:4px;background:#000;border-radius:50%"></div><svg style="left:511px;top:287px;" width="16" height="14" viewBox="0 0 16 14"><path d="M1.5 2.6 L3.6 2.6 L4.6 0.6 Q4.9 0 5.6 0 L10.4 0 Q11.1 0 11.4 0.6 L12.4 2.6 L14.5 2.6 Q16 2.6 16 4.1 L16 12.5 Q16 14 14.5 14 L1.5 14 Q0 14 0 12.5 L0 4.1 Q0 2.6 1.5 2.6Z" fill="#2594cc"/><circle cx="8" cy="8.2" r="3.1" fill="none" stroke="#fff" stroke-width="1.9"/></svg><div style="left:552px;top:287px;width:14px;height:14px;background:#5fdf2f;border-radius:50%"></div><span class="t" style="left:667px;top:284.00px;height:21px;line-height:21px;font-size:13px;color:#222;letter-spacing:0.066px;">1A 9066</span><span class="t" style="left:812px;top:284.00px;height:21px;line-height:21px;font-size:13px;color:#222;letter-spacing:0.104px;">Pakking / O-rin...</span><span class="t" style="left:927px;top:284.00px;height:21px;line-height:21px;font-size:13px;color:#222;letter-spacing:0.113px;">01096</span><span class="t" style="left:1042px;top:284.00px;height:21px;line-height:21px;font-size:13px;color:#222;letter-spacing:-0.033px;">0,00</span><span class="t" style="left:1282px;top:284.00px;height:21px;line-height:21px;font-size:13px;color:#222;letter-spacing:-0.033px;">5,00</span><span class="t" style="left:1397px;top:284.00px;height:21px;line-height:21px;font-size:13px;color:#222;letter-spacing:-0.033px;">0,00</span><span class="t" style="left:1532px;top:284.00px;height:21px;line-height:21px;font-size:13px;color:#222;letter-spacing:-0.033px;">0,00</span><span class="t" style="left:1667px;top:284.00px;height:21px;line-height:21px;font-size:13px;color:#222;letter-spacing:0.271px;">Caterpillar</span><div style="left:429px;top:346px;width:1457px;height:1px;background:#d4d4d4"></div><div style="left:439px;top:320px;width:16px;height:16px;border:1px solid #e6e6e6;border-radius:3px;box-sizing:border-box;background:#fff"></div><div style="left:473px;top:326px;width:4px;height:4px;background:#000;border-radius:50%"></div><div style="left:480px;top:326px;width:4px;height:4px;background:#000;border-radius:50%"></div><div style="left:487px;top:326px;width:4px;height:4px;background:#000;border-radius:50%"></div><svg style="left:511px;top:323px;" width="16" height="14" viewBox="0 0 16 14"><path d="M1.5 2.6 L3.6 2.6 L4.6 0.6 Q4.9 0 5.6 0 L10.4 0 Q11.1 0 11.4 0.6 L12.4 2.6 L14.5 2.6 Q16 2.6 16 4.1 L16 12.5 Q16 14 14.5 14 L1.5 14 Q0 14 0 12.5 L0 4.1 Q0 2.6 1.5 2.6Z" fill="#2594cc"/><circle cx="8" cy="8.2" r="3.1" fill="none" stroke="#fff" stroke-width="1.9"/></svg><div style="left:552px;top:323px;width:14px;height:14px;background:#5fdf2f;border-radius:50%"></div><span class="t" style="left:667px;top:320.00px;height:21px;line-height:21px;font-size:13px;color:#222;letter-spacing:0.054px;">1H 9696</span><span class="t" style="left:812px;top:320.00px;height:21px;line-height:21px;font-size:13px;color:#222;letter-spacing:0.104px;">Pakking / O-rin...</span><span class="t" style="left:927px;top:320.00px;height:21px;line-height:21px;font-size:13px;color:#222;letter-spacing:0.113px;">01673</span><span class="t" style="left:1042px;top:320.00px;height:21px;line-height:21px;font-size:13px;color:#222;letter-spacing:-0.033px;">0,00</span><span class="t" style="left:1282px;top:320.00px;height:21px;line-height:21px;font-size:13px;color:#222;letter-spacing:-0.033px;">4,00</span><span class="t" style="left:1397px;top:320.00px;height:21px;line-height:21px;font-size:13px;color:#222;letter-spacing:-0.033px;">0,00</span><span class="t" style="left:1532px;top:320.00px;height:21px;line-height:21px;font-size:13px;color:#222;letter-spacing:-0.033px;">0,00</span><span class="t" style="left:1667px;top:320.00px;height:21px;line-height:21px;font-size:13px;color:#222;letter-spacing:0.271px;">Caterpillar</span><div style="left:429px;top:382px;width:1457px;height:1px;background:#d4d4d4"></div><div style="left:439px;top:356px;width:16px;height:16px;border:1px solid #e6e6e6;border-radius:3px;box-sizing:border-box;background:#fff"></div><div style="left:473px;top:362px;width:4px;height:4px;background:#000;border-radius:50%"></div><div style="left:480px;top:362px;width:4px;height:4px;background:#000;border-radius:50%"></div><div style="left:487px;top:362px;width:4px;height:4px;background:#000;border-radius:50%"></div><svg style="left:511px;top:359px;" width="16" height="14" viewBox="0 0 16 14"><path d="M1.5 2.6 L3.6 2.6 L4.6 0.6 Q4.9 0 5.6 0 L10.4 0 Q11.1 0 11.4 0.6 L12.4 2.6 L14.5 2.6 Q16 2.6 16 4.1 L16 12.5 Q16 14 14.5 14 L1.5 14 Q0 14 0 12.5 L0 4.1 Q0 2.6 1.5 2.6Z" fill="#2594cc"/><circle cx="8" cy="8.2" r="3.1" fill="none" stroke="#fff" stroke-width="1.9"/></svg><div style="left:552px;top:359px;width:14px;height:14px;background:#5fdf2f;border-radius:50%"></div><span class="t" style="left:667px;top:356.00px;height:21px;line-height:21px;font-size:13px;color:#222;letter-spacing:0.030px;">1L 8212</span><span class="t" style="left:812px;top:356.00px;height:21px;line-height:21px;font-size:13px;color:#222;letter-spacing:0.141px;">Pakking / O-ring</span><span class="t" style="left:927px;top:356.00px;height:21px;line-height:21px;font-size:13px;color:#222;letter-spacing:0.306px;">01102</span><span class="t" style="left:1042px;top:356.00px;height:21px;line-height:21px;font-size:13px;color:#222;letter-spacing:-0.033px;">0,00</span><span class="t" style="left:1282px;top:356.00px;height:21px;line-height:21px;font-size:13px;color:#222;letter-spacing:-0.033px;">2,00</span><span class="t" style="left:1397px;top:356.00px;height:21px;line-height:21px;font-size:13px;color:#222;letter-spacing:-0.033px;">0,00</span><span class="t" style="left:1532px;top:356.00px;height:21px;line-height:21px;font-size:13px;color:#222;letter-spacing:-0.033px;">0,00</span><span class="t" style="left:1667px;top:356.00px;height:21px;line-height:21px;font-size:13px;color:#222;letter-spacing:0.271px;">Caterpillar</span><div style="left:429px;top:418px;width:1457px;height:1px;background:#d4d4d4"></div><div style="left:439px;top:392px;width:16px;height:16px;border:1px solid #e6e6e6;border-radius:3px;box-sizing:border-box;background:#fff"></div><div style="left:473px;top:398px;width:4px;height:4px;background:#000;border-radius:50%"></div><div style="left:480px;top:398px;width:4px;height:4px;background:#000;border-radius:50%"></div><div style="left:487px;top:398px;width:4px;height:4px;background:#000;border-radius:50%"></div><svg style="left:511px;top:395px;" width="16" height="14" viewBox="0 0 16 14"><path d="M1.5 2.6 L3.6 2.6 L4.6 0.6 Q4.9 0 5.6 0 L10.4 0 Q11.1 0 11.4 0.6 L12.4 2.6 L14.5 2.6 Q16 2.6 16 4.1 L16 12.5 Q16 14 14.5 14 L1.5 14 Q0 14 0 12.5 L0 4.1 Q0 2.6 1.5 2.6Z" fill="#2594cc"/><circle cx="8" cy="8.2" r="3.1" fill="none" stroke="#fff" stroke-width="1.9"/></svg><div style="left:552px;top:395px;width:14px;height:14px;background:#5fdf2f;border-radius:50%"></div><span class="t" style="left:667px;top:392.00px;height:21px;line-height:21px;font-size:13px;color:#222;letter-spacing:-0.188px;">1LF3485</span><span class="t" style="left:812px;top:392.00px;height:21px;line-height:21px;font-size:13px;color:#222;letter-spacing:0.255px;">Filter lub oil</span><span class="t" style="left:927px;top:392.00px;height:21px;line-height:21px;font-size:13px;color:#222;letter-spacing:0.113px;">00090</span><span class="t" style="left:1042px;top:392.00px;height:21px;line-height:21px;font-size:13px;color:#222;letter-spacing:-0.033px;">0,00</span><span class="t" style="left:1282px;top:392.00px;height:21px;line-height:21px;font-size:13px;color:#222;letter-spacing:-0.005px;">32,00</span><span class="t" style="left:1397px;top:392.00px;height:21px;line-height:21px;font-size:13px;color:#222;letter-spacing:-0.033px;">6,00</span><span class="t" style="left:1532px;top:392.00px;height:21px;line-height:21px;font-size:13px;color:#222;letter-spacing:-0.005px;">50,00</span><span class="t" style="left:1667px;top:392.00px;height:21px;line-height:21px;font-size:13px;color:#222;letter-spacing:0.184px;">Fleetguard</span><div style="left:429px;top:454px;width:1457px;height:1px;background:#d4d4d4"></div><div style="left:439px;top:428px;width:16px;height:16px;border:1px solid #e6e6e6;border-radius:3px;box-sizing:border-box;background:#fff"></div><div style="left:473px;top:434px;width:4px;height:4px;background:#000;border-radius:50%"></div><div style="left:480px;top:434px;width:4px;height:4px;background:#000;border-radius:50%"></div><div style="left:487px;top:434px;width:4px;height:4px;background:#000;border-radius:50%"></div><svg style="left:511px;top:431px;" width="16" height="14" viewBox="0 0 16 14"><path d="M1.5 2.6 L3.6 2.6 L4.6 0.6 Q4.9 0 5.6 0 L10.4 0 Q11.1 0 11.4 0.6 L12.4 2.6 L14.5 2.6 Q16 2.6 16 4.1 L16 12.5 Q16 14 14.5 14 L1.5 14 Q0 14 0 12.5 L0 4.1 Q0 2.6 1.5 2.6Z" fill="#2594cc"/><circle cx="8" cy="8.2" r="3.1" fill="none" stroke="#fff" stroke-width="1.9"/></svg><div style="left:552px;top:431px;width:14px;height:14px;background:#5fdf2f;border-radius:50%"></div><span class="t" style="left:667px;top:428.00px;height:21px;line-height:21px;font-size:13px;color:#222;letter-spacing:0.083px;">1N 4679</span><span class="t" style="left:812px;top:428.00px;height:21px;line-height:21px;font-size:13px;color:#222;letter-spacing:0.395px;">rod A</span><span class="t" style="left:927px;top:428.00px;height:21px;line-height:21px;font-size:13px;color:#222;letter-spacing:0.113px;">00895</span><span class="t" style="left:1042px;top:428.00px;height:21px;line-height:21px;font-size:13px;color:#222;letter-spacing:-0.033px;">0,00</span><span class="t" style="left:1282px;top:428.00px;height:21px;line-height:21px;font-size:13px;color:#222;letter-spacing:-0.033px;">1,00</span><span class="t" style="left:1397px;top:428.00px;height:21px;line-height:21px;font-size:13px;color:#222;letter-spacing:-0.033px;">0,00</span><span class="t" style="left:1532px;top:428.00px;height:21px;line-height:21px;font-size:13px;color:#222;letter-spacing:-0.033px;">0,00</span><span class="t" style="left:1667px;top:428.00px;height:21px;line-height:21px;font-size:13px;color:#222;letter-spacing:0.271px;">Caterpillar</span><div style="left:429px;top:490px;width:1457px;height:1px;background:#d4d4d4"></div><div style="left:439px;top:464px;width:16px;height:16px;border:1px solid #e6e6e6;border-radius:3px;box-sizing:border-box;background:#fff"></div><div style="left:473px;top:470px;width:4px;height:4px;background:#000;border-radius:50%"></div><div style="left:480px;top:470px;width:4px;height:4px;background:#000;border-radius:50%"></div><div style="left:487px;top:470px;width:4px;height:4px;background:#000;border-radius:50%"></div><svg style="left:552px;top:467px;" width="14" height="14" viewBox="0 0 14 14"><path d="M7 0.2 L13.8 7 L7 13.8 L0.2 7Z" fill="#f5103a"/></svg><span class="t" style="left:667px;top:464.00px;height:21px;line-height:21px;font-size:13px;color:#222;letter-spacing:-0.190px;">1S 1251</span><span class="t" style="left:812px;top:464.00px;height:21px;line-height:21px;font-size:13px;color:#222;letter-spacing:0.015px;">gaskets</span><span class="t" style="left:927px;top:464.00px;height:21px;line-height:21px;font-size:13px;color:#222;letter-spacing:0.113px;">00247</span><span class="t" style="left:1042px;top:464.00px;height:21px;line-height:21px;font-size:13px;color:#222;letter-spacing:-0.033px;">0,00</span><span class="t" style="left:1282px;top:464.00px;height:21px;line-height:21px;font-size:13px;color:#222;letter-spacing:-0.033px;">0,00</span><span class="t" style="left:1397px;top:464.00px;height:21px;line-height:21px;font-size:13px;color:#222;letter-spacing:-0.033px;">5,00</span><span class="t" style="left:1532px;top:464.00px;height:21px;line-height:21px;font-size:13px;color:#222;letter-spacing:-0.005px;">10,00</span><span class="t" style="left:1667px;top:464.00px;height:21px;line-height:21px;font-size:13px;color:#222;letter-spacing:0.271px;">Caterpillar</span><div style="left:429px;top:526px;width:1457px;height:1px;background:#d4d4d4"></div><div style="left:439px;top:500px;width:16px;height:16px;border:1px solid #e6e6e6;border-radius:3px;box-sizing:border-box;background:#fff"></div><div style="left:473px;top:506px;width:4px;height:4px;background:#000;border-radius:50%"></div><div style="left:480px;top:506px;width:4px;height:4px;background:#000;border-radius:50%"></div><div style="left:487px;top:506px;width:4px;height:4px;background:#000;border-radius:50%"></div><svg style="left:511px;top:503px;" width="16" height="14" viewBox="0 0 16 14"><path d="M1.5 2.6 L3.6 2.6 L4.6 0.6 Q4.9 0 5.6 0 L10.4 0 Q11.1 0 11.4 0.6 L12.4 2.6 L14.5 2.6 Q16 2.6 16 4.1 L16 12.5 Q16 14 14.5 14 L1.5 14 Q0 14 0 12.5 L0 4.1 Q0 2.6 1.5 2.6Z" fill="#2594cc"/><circle cx="8" cy="8.2" r="3.1" fill="none" stroke="#fff" stroke-width="1.9"/></svg><div style="left:552px;top:503px;width:14px;height:14px;background:#5fdf2f;border-radius:50%"></div><span class="t" style="left:667px;top:500.00px;height:21px;line-height:21px;font-size:13px;color:#222;letter-spacing:-0.014px;">1W 5728</span><span class="t" style="left:812px;top:500.00px;height:21px;line-height:21px;font-size:13px;color:#222;letter-spacing:-0.231px;">Sleeve</span><span class="t" style="left:927px;top:500.00px;height:21px;line-height:21px;font-size:13px;color:#222;letter-spacing:0.113px;">01218</span><span class="t" style="left:1042px;top:500.00px;height:21px;line-height:21px;font-size:13px;color:#222;letter-spacing:-0.033px;">0,00</span><span class="t" style="left:1282px;top:500.00px;height:21px;line-height:21px;font-size:13px;color:#222;letter-spacing:-0.033px;">2,00</span><span class="t" style="left:1397px;top:500.00px;height:21px;line-height:21px;font-size:13px;color:#222;letter-spacing:-0.033px;">0,00</span><span class="t" style="left:1532px;top:500.00px;height:21px;line-height:21px;font-size:13px;color:#222;letter-spacing:-0.033px;">0,00</span><span class="t" style="left:1667px;top:500.00px;height:21px;line-height:21px;font-size:13px;color:#222;letter-spacing:0.271px;">Caterpillar</span><div style="left:429px;top:562px;width:1457px;height:1px;background:#d4d4d4"></div><div style="left:439px;top:536px;width:16px;height:16px;border:1px solid #e6e6e6;border-radius:3px;box-sizing:border-box;background:#fff"></div><div style="left:473px;top:542px;width:4px;height:4px;background:#000;border-radius:50%"></div><div style="left:480px;top:542px;width:4px;height:4px;background:#000;border-radius:50%"></div><div style="left:487px;top:542px;width:4px;height:4px;background:#000;border-radius:50%"></div><svg style="left:511px;top:539px;" width="16" height="14" viewBox="0 0 16 14"><path d="M1.5 2.6 L3.6 2.6 L4.6 0.6 Q4.9 0 5.6 0 L10.4 0 Q11.1 0 11.4 0.6 L12.4 2.6 L14.5 2.6 Q16 2.6 16 4.1 L16 12.5 Q16 14 14.5 14 L1.5 14 Q0 14 0 12.5 L0 4.1 Q0 2.6 1.5 2.6Z" fill="#2594cc"/><circle cx="8" cy="8.2" r="3.1" fill="none" stroke="#fff" stroke-width="1.9"/></svg><div style="left:552px;top:539px;width:14px;height:14px;background:#5fdf2f;border-radius:50%"></div><span class="t" style="left:667px;top:536.00px;height:21px;line-height:21px;font-size:13px;color:#222;letter-spacing:-0.096px;">1W 7391   (3512 DI....</span><span class="t" style="left:812px;top:536.00px;height:21px;line-height:21px;font-size:13px;color:#222;letter-spacing:0.104px;">Pakking / O-rin...</span><span class="t" style="left:927px;top:536.00px;height:21px;line-height:21px;font-size:13px;color:#222;letter-spacing:0.113px;">00460</span><span class="t" style="left:1042px;top:536.00px;height:21px;line-height:21px;font-size:13px;color:#222;letter-spacing:-0.033px;">0,00</span><span class="t" style="left:1282px;top:536.00px;height:21px;line-height:21px;font-size:13px;color:#222;letter-spacing:-0.033px;">4,00</span><span class="t" style="left:1397px;top:536.00px;height:21px;line-height:21px;font-size:13px;color:#222;letter-spacing:-0.033px;">0,00</span><span class="t" style="left:1532px;top:536.00px;height:21px;line-height:21px;font-size:13px;color:#222;letter-spacing:-0.033px;">0,00</span><span class="t" style="left:1667px;top:536.00px;height:21px;line-height:21px;font-size:13px;color:#222;letter-spacing:0.271px;">Caterpillar</span><div style="left:429px;top:598px;width:1457px;height:1px;background:#d4d4d4"></div><div style="left:439px;top:572px;width:16px;height:16px;border:1px solid #e6e6e6;border-radius:3px;box-sizing:border-box;background:#fff"></div><div style="left:473px;top:578px;width:4px;height:4px;background:#000;border-radius:50%"></div><div style="left:480px;top:578px;width:4px;height:4px;background:#000;border-radius:50%"></div><div style="left:487px;top:578px;width:4px;height:4px;background:#000;border-radius:50%"></div><svg style="left:511px;top:575px;" width="16" height="14" viewBox="0 0 16 14"><path d="M1.5 2.6 L3.6 2.6 L4.6 0.6 Q4.9 0 5.6 0 L10.4 0 Q11.1 0 11.4 0.6 L12.4 2.6 L14.5 2.6 Q16 2.6 16 4.1 L16 12.5 Q16 14 14.5 14 L1.5 14 Q0 14 0 12.5 L0 4.1 Q0 2.6 1.5 2.6Z" fill="#2594cc"/><circle cx="8" cy="8.2" r="3.1" fill="none" stroke="#fff" stroke-width="1.9"/></svg><div style="left:552px;top:575px;width:14px;height:14px;background:#5fdf2f;border-radius:50%"></div><span class="t" style="left:667px;top:572.00px;height:21px;line-height:21px;font-size:13px;color:#222;letter-spacing:-0.014px;">1W 7580</span><span class="t" style="left:812px;top:572.00px;height:21px;line-height:21px;font-size:13px;color:#222;letter-spacing:0.040px;">Pakking</span><span class="t" style="left:927px;top:572.00px;height:21px;line-height:21px;font-size:13px;color:#222;letter-spacing:0.113px;">00088</span><span class="t" style="left:1042px;top:572.00px;height:21px;line-height:21px;font-size:13px;color:#222;letter-spacing:-0.033px;">0,00</span><span class="t" style="left:1282px;top:572.00px;height:21px;line-height:21px;font-size:13px;color:#222;letter-spacing:-0.033px;">1,00</span><span class="t" style="left:1397px;top:572.00px;height:21px;line-height:21px;font-size:13px;color:#222;letter-spacing:-0.033px;">0,00</span><span class="t" style="left:1532px;top:572.00px;height:21px;line-height:21px;font-size:13px;color:#222;letter-spacing:-0.033px;">0,00</span><span class="t" style="left:1667px;top:572.00px;height:21px;line-height:21px;font-size:13px;color:#222;letter-spacing:0.271px;">Caterpillar</span><div style="left:429px;top:634px;width:1457px;height:1px;background:#d4d4d4"></div><div style="left:439px;top:608px;width:16px;height:16px;border:1px solid #e6e6e6;border-radius:3px;box-sizing:border-box;background:#fff"></div><div style="left:473px;top:614px;width:4px;height:4px;background:#000;border-radius:50%"></div><div style="left:480px;top:614px;width:4px;height:4px;background:#000;border-radius:50%"></div><div style="left:487px;top:614px;width:4px;height:4px;background:#000;border-radius:50%"></div><div style="left:552px;top:611px;width:14px;height:14px;background:#5fdf2f;border-radius:50%"></div><span class="t" style="left:667px;top:608.00px;height:21px;line-height:21px;font-size:13px;color:#222;letter-spacing:-0.014px;">1W 9782</span><span class="t" style="left:812px;top:608.00px;height:21px;line-height:21px;font-size:13px;color:#222;letter-spacing:0.158px;">Gasket-Shut-off</span><span class="t" style="left:927px;top:608.00px;height:21px;line-height:21px;font-size:13px;color:#222;letter-spacing:0.306px;">01137</span><span class="t" style="left:1042px;top:608.00px;height:21px;line-height:21px;font-size:13px;color:#222;letter-spacing:-0.033px;">0,00</span><span class="t" style="left:1282px;top:608.00px;height:21px;line-height:21px;font-size:13px;color:#222;letter-spacing:-0.033px;">1,00</span><span class="t" style="left:1397px;top:608.00px;height:21px;line-height:21px;font-size:13px;color:#222;letter-spacing:-0.033px;">0,00</span><span class="t" style="left:1532px;top:608.00px;height:21px;line-height:21px;font-size:13px;color:#222;letter-spacing:-0.033px;">0,00</span><span class="t" style="left:1667px;top:608.00px;height:21px;line-height:21px;font-size:13px;color:#222;letter-spacing:0.271px;">Caterpillar</span><div style="left:429px;top:670px;width:1457px;height:1px;background:#d4d4d4"></div><div style="left:439px;top:644px;width:16px;height:16px;border:1px solid #e6e6e6;border-radius:3px;box-sizing:border-box;background:#fff"></div><div style="left:473px;top:650px;width:4px;height:4px;background:#000;border-radius:50%"></div><div style="left:480px;top:650px;width:4px;height:4px;background:#000;border-radius:50%"></div><div style="left:487px;top:650px;width:4px;height:4px;background:#000;border-radius:50%"></div><div style="left:552px;top:647px;width:14px;height:14px;background:#5fdf2f;border-radius:50%"></div><span class="t" style="left:667px;top:644.00px;height:21px;line-height:21px;font-size:13px;color:#222;letter-spacing:0.064px;">207 1382</span><span class="t" style="left:812px;top:644.00px;height:21px;line-height:21px;font-size:13px;color:#222;letter-spacing:0.141px;">Pakking / O-ring</span><span class="t" style="left:927px;top:644.00px;height:21px;line-height:21px;font-size:13px;color:#222;letter-spacing:0.113px;">01312</span><span class="t" style="left:1042px;top:644.00px;height:21px;line-height:21px;font-size:13px;color:#222;letter-spacing:-0.033px;">0,00</span><span class="t" style="left:1282px;top:644.00px;height:21px;line-height:21px;font-size:13px;color:#222;letter-spacing:-0.033px;">4,00</span><span class="t" style="left:1397px;top:644.00px;height:21px;line-height:21px;font-size:13px;color:#222;letter-spacing:-0.033px;">0,00</span><span class="t" style="left:1532px;top:644.00px;height:21px;line-height:21px;font-size:13px;color:#222;letter-spacing:-0.033px;">0,00</span><span class="t" style="left:1667px;top:644.00px;height:21px;line-height:21px;font-size:13px;color:#222;letter-spacing:0.271px;">Caterpillar</span><div style="left:429px;top:706px;width:1457px;height:1px;background:#d4d4d4"></div><div style="left:439px;top:680px;width:16px;height:16px;border:1px solid #e6e6e6;border-radius:3px;box-sizing:border-box;background:#fff"></div><div style="left:473px;top:686px;width:4px;height:4px;background:#000;border-radius:50%"></div><div style="left:480px;top:686px;width:4px;height:4px;background:#000;border-radius:50%"></div><div style="left:487px;top:686px;width:4px;height:4px;background:#000;border-radius:50%"></div><div style="left:552px;top:683px;width:14px;height:14px;background:#5fdf2f;border-radius:50%"></div><span class="t" style="left:667px;top:680.00px;height:21px;line-height:21px;font-size:13px;color:#222;letter-spacing:0.073px;">247-3796</span><span class="t" style="left:812px;top:680.00px;height:21px;line-height:21px;font-size:13px;color:#222;letter-spacing:0.079px;">gasket</span><span class="t" style="left:927px;top:680.00px;height:21px;line-height:21px;font-size:13px;color:#222;letter-spacing:0.113px;">01728</span><span class="t" style="left:1042px;top:680.00px;height:21px;line-height:21px;font-size:13px;color:#222;letter-spacing:-0.033px;">0,00</span><span class="t" style="left:1282px;top:680.00px;height:21px;line-height:21px;font-size:13px;color:#222;letter-spacing:-0.033px;">2,00</span><span class="t" style="left:1397px;top:680.00px;height:21px;line-height:21px;font-size:13px;color:#222;letter-spacing:-0.033px;">0,00</span><span class="t" style="left:1532px;top:680.00px;height:21px;line-height:21px;font-size:13px;color:#222;letter-spacing:-0.033px;">0,00</span><span class="t" style="left:1667px;top:680.00px;height:21px;line-height:21px;font-size:13px;color:#222;letter-spacing:0.271px;">Caterpillar</span><div style="left:429px;top:742px;width:1457px;height:1px;background:#d4d4d4"></div><div style="left:439px;top:716px;width:16px;height:16px;border:1px solid #e6e6e6;border-radius:3px;box-sizing:border-box;background:#fff"></div><div style="left:473px;top:722px;width:4px;height:4px;background:#000;border-radius:50%"></div><div style="left:480px;top:722px;width:4px;height:4px;background:#000;border-radius:50%"></div><div style="left:487px;top:722px;width:4px;height:4px;background:#000;border-radius:50%"></div><div style="left:552px;top:719px;width:14px;height:14px;background:#5fdf2f;border-radius:50%"></div><span class="t" style="left:667px;top:716.00px;height:21px;line-height:21px;font-size:13px;color:#222;letter-spacing:-0.397px;">2J 0157</span><span class="t" style="left:812px;top:716.00px;height:21px;line-height:21px;font-size:13px;color:#222;letter-spacing:-0.013px;">Seal-O-ring</span><span class="t" style="left:927px;top:716.00px;height:21px;line-height:21px;font-size:13px;color:#222;letter-spacing:0.113px;">01575</span><span class="t" style="left:1042px;top:716.00px;height:21px;line-height:21px;font-size:13px;color:#222;letter-spacing:-0.033px;">0,00</span><span class="t" style="left:1282px;top:716.00px;height:21px;line-height:21px;font-size:13px;color:#222;letter-spacing:-0.033px;">4,00</span><span class="t" style="left:1397px;top:716.00px;height:21px;line-height:21px;font-size:13px;color:#222;letter-spacing:-0.033px;">0,00</span><span class="t" style="left:1532px;top:716.00px;height:21px;line-height:21px;font-size:13px;color:#222;letter-spacing:-0.033px;">0,00</span><span class="t" style="left:1667px;top:716.00px;height:21px;line-height:21px;font-size:13px;color:#222;letter-spacing:0.271px;">Caterpillar</span><div style="left:429px;top:778px;width:1457px;height:1px;background:#d4d4d4"></div><div style="left:439px;top:752px;width:16px;height:16px;border:1px solid #e6e6e6;border-radius:3px;box-sizing:border-box;background:#fff"></div><div style="left:473px;top:758px;width:4px;height:4px;background:#000;border-radius:50%"></div><div style="left:480px;top:758px;width:4px;height:4px;background:#000;border-radius:50%"></div><div style="left:487px;top:758px;width:4px;height:4px;background:#000;border-radius:50%"></div><div style="left:552px;top:755px;width:14px;height:14px;background:#5fdf2f;border-radius:50%"></div><span class="t" style="left:667px;top:752.00px;height:21px;line-height:21px;font-size:13px;color:#222;letter-spacing:0.151px;">2M 9780</span><span class="t" style="left:812px;top:752.00px;height:21px;line-height:21px;font-size:13px;color:#222;letter-spacing:0.052px;">O-ring  blz.261...</span><span class="t" style="left:927px;top:752.00px;height:21px;line-height:21px;font-size:13px;color:#222;letter-spacing:0.306px;">01194</span><span class="t" style="left:1042px;top:752.00px;height:21px;line-height:21px;font-size:13px;color:#222;letter-spacing:-0.033px;">0,00</span><span class="t" style="left:1282px;top:752.00px;height:21px;line-height:21px;font-size:13px;color:#222;letter-spacing:-0.005px;">13,00</span><span class="t" style="left:1397px;top:752.00px;height:21px;line-height:21px;font-size:13px;color:#222;letter-spacing:-0.033px;">0,00</span><span class="t" style="left:1532px;top:752.00px;height:21px;line-height:21px;font-size:13px;color:#222;letter-spacing:-0.033px;">0,00</span><span class="t" style="left:1667px;top:752.00px;height:21px;line-height:21px;font-size:13px;color:#222;letter-spacing:0.271px;">Caterpillar</span><div style="left:429px;top:814px;width:1457px;height:1px;background:#d4d4d4"></div><div style="left:439px;top:788px;width:16px;height:16px;border:1px solid #e6e6e6;border-radius:3px;box-sizing:border-box;background:#fff"></div><div style="left:473px;top:794px;width:4px;height:4px;background:#000;border-radius:50%"></div><div style="left:480px;top:794px;width:4px;height:4px;background:#000;border-radius:50%"></div><div style="left:487px;top:794px;width:4px;height:4px;background:#000;border-radius:50%"></div><div style="left:552px;top:791px;width:14px;height:14px;background:#5fdf2f;border-radius:50%"></div><span class="t" style="left:667px;top:788.00px;height:21px;line-height:21px;font-size:13px;color:#222;letter-spacing:0.222px;">2M9189</span><span class="t" style="left:812px;top:788.00px;height:21px;line-height:21px;font-size:13px;color:#222;letter-spacing:0.141px;">Pakking / O-ring</span><span class="t" style="left:927px;top:788.00px;height:21px;line-height:21px;font-size:13px;color:#222;letter-spacing:0.113px;">00360</span><span class="t" style="left:1042px;top:788.00px;height:21px;line-height:21px;font-size:13px;color:#222;letter-spacing:-0.033px;">0,00</span><span class="t" style="left:1282px;top:788.00px;height:21px;line-height:21px;font-size:13px;color:#222;letter-spacing:-0.033px;">1,00</span><span class="t" style="left:1397px;top:788.00px;height:21px;line-height:21px;font-size:13px;color:#222;letter-spacing:-0.033px;">0,00</span><span class="t" style="left:1532px;top:788.00px;height:21px;line-height:21px;font-size:13px;color:#222;letter-spacing:-0.033px;">0,00</span><span class="t" style="left:1667px;top:788.00px;height:21px;line-height:21px;font-size:13px;color:#222;letter-spacing:0.271px;">Caterpillar</span><div style="left:429px;top:850px;width:1457px;height:1px;background:#d4d4d4"></div><div style="left:439px;top:824px;width:16px;height:16px;border:1px solid #e6e6e6;border-radius:3px;box-sizing:border-box;background:#fff"></div><div style="left:473px;top:830px;width:4px;height:4px;background:#000;border-radius:50%"></div><div style="left:480px;top:830px;width:4px;height:4px;background:#000;border-radius:50%"></div><div style="left:487px;top:830px;width:4px;height:4px;background:#000;border-radius:50%"></div><svg style="left:511px;top:827px;" width="16" height="14" viewBox="0 0 16 14"><path d="M1.5 2.6 L3.6 2.6 L4.6 0.6 Q4.9 0 5.6 0 L10.4 0 Q11.1 0 11.4 0.6 L12.4 2.6 L14.5 2.6 Q16 2.6 16 4.1 L16 12.5 Q16 14 14.5 14 L1.5 14 Q0 14 0 12.5 L0 4.1 Q0 2.6 1.5 2.6Z" fill="#2594cc"/><circle cx="8" cy="8.2" r="3.1" fill="none" stroke="#fff" stroke-width="1.9"/></svg><div style="left:552px;top:827px;width:14px;height:14px;background:#5fdf2f;border-radius:50%"></div><span class="t" style="left:667px;top:824.00px;height:21px;line-height:21px;font-size:13px;color:#222;letter-spacing:-0.190px;">2S 5100</span><span class="t" style="left:812px;top:824.00px;height:21px;line-height:21px;font-size:13px;color:#222;letter-spacing:0.201px;">aftapkraantje (...</span><span class="t" style="left:927px;top:824.00px;height:21px;line-height:21px;font-size:13px;color:#222;letter-spacing:0.113px;">00367</span><span class="t" style="left:1042px;top:824.00px;height:21px;line-height:21px;font-size:13px;color:#222;letter-spacing:-0.033px;">0,00</span><span class="t" style="left:1282px;top:824.00px;height:21px;line-height:21px;font-size:13px;color:#222;letter-spacing:-0.033px;">4,00</span><span class="t" style="left:1397px;top:824.00px;height:21px;line-height:21px;font-size:13px;color:#222;letter-spacing:-0.033px;">0,00</span><span class="t" style="left:1532px;top:824.00px;height:21px;line-height:21px;font-size:13px;color:#222;letter-spacing:-0.033px;">0,00</span><span class="t" style="left:1667px;top:824.00px;height:21px;line-height:21px;font-size:13px;color:#222;letter-spacing:0.271px;">Caterpillar</span><div style="left:429px;top:886px;width:1457px;height:1px;background:#d4d4d4"></div><div style="left:439px;top:860px;width:16px;height:16px;border:1px solid #e6e6e6;border-radius:3px;box-sizing:border-box;background:#fff"></div><div style="left:473px;top:866px;width:4px;height:4px;background:#000;border-radius:50%"></div><div style="left:480px;top:866px;width:4px;height:4px;background:#000;border-radius:50%"></div><div style="left:487px;top:866px;width:4px;height:4px;background:#000;border-radius:50%"></div><div style="left:552px;top:863px;width:14px;height:14px;background:#5fdf2f;border-radius:50%"></div><span class="t" style="left:667px;top:860.00px;height:21px;line-height:21px;font-size:13px;color:#222;letter-spacing:-0.190px;">2S 8439</span><span class="t" style="left:812px;top:860.00px;height:21px;line-height:21px;font-size:13px;color:#222;letter-spacing:0.141px;">Pakking / O-ring</span><span class="t" style="left:927px;top:860.00px;height:21px;line-height:21px;font-size:13px;color:#222;letter-spacing:0.113px;">01332</span><span class="t" style="left:1042px;top:860.00px;height:21px;line-height:21px;font-size:13px;color:#222;letter-spacing:-0.033px;">0,00</span><span class="t" style="left:1282px;top:860.00px;height:21px;line-height:21px;font-size:13px;color:#222;letter-spacing:-0.033px;">8,00</span><span class="t" style="left:1397px;top:860.00px;height:21px;line-height:21px;font-size:13px;color:#222;letter-spacing:-0.033px;">0,00</span><span class="t" style="left:1532px;top:860.00px;height:21px;line-height:21px;font-size:13px;color:#222;letter-spacing:-0.033px;">0,00</span><span class="t" style="left:1667px;top:860.00px;height:21px;line-height:21px;font-size:13px;color:#222;letter-spacing:0.271px;">Caterpillar</span><div style="left:1886px;top:202px;width:17px;height:688px;background:#f1f1f1"></div><div style="left:1888px;top:219px;width:13px;height:417px;background:#c1c1c1"></div><svg style="left:1890px;top:208px;" width="9" height="6" viewBox="0 0 9 6"><path d="M4.5 0.6 L8.4 5 L0.6 5Z" fill="#c0c0c0"/></svg><svg style="left:1890px;top:878px;" width="9" height="6" viewBox="0 0 9 6"><path d="M0.6 1 L8.4 1 L4.5 5.4Z" fill="#505050"/></svg><div style="left:429px;top:890px;width:1457px;height:17px;background:#f1f1f1"></div><div style="left:446px;top:892px;width:1212px;height:13px;background:#c1c1c1"></div><svg style="left:434px;top:894px;" width="6" height="9" viewBox="0 0 6 9"><path d="M5 0.6 L5 8.4 L0.8 4.5Z" fill="#a3a3a3"/></svg><svg style="left:1875px;top:894px;" width="6" height="9" viewBox="0 0 6 9"><path d="M1 0.6 L1 8.4 L5.4 4.5Z" fill="#505050"/></svg><div style="left:1886px;top:890px;width:17px;height:17px;background:#e6e6e6;background-image:repeating-linear-gradient(45deg,#dcdcdc 0 1px,transparent 1px 3px)"></div><div style="left:429px;top:907px;width:1474px;height:1px;background:#d6d6d6"></div><div style="left:429px;top:908px;width:1474px;height:49px;background:#e4eaf4;border-bottom-left-radius:5px"></div><div style="left:495px;top:920px;width:25px;height:28px;background:#2594cc"></div><span class="t" style="left:504px;top:923.50px;height:21px;line-height:21px;font-size:13px;color:#fff;font-weight:bold;">1</span><span class="t" style="left:529px;top:923.50px;height:21px;line-height:21px;font-size:13px;color:#222;-webkit-text-stroke:0.2px #222;">2</span><span class="t" style="left:555px;top:923.50px;height:21px;line-height:21px;font-size:13px;color:#222;-webkit-text-stroke:0.2px #222;">3</span><svg style="left:449px;top:931px;" width="8" height="9" viewBox="0 0 8 9"><rect x="0" y="0" width="1.3" height="8.4" fill="#8d8483"/><path d="M7.4 0.6 L7.4 7.8 L1.8 4.2Z" fill="#8d8483"/></svg><svg style="left:477px;top:931px;" width="7" height="9" viewBox="0 0 7 9"><path d="M6.2 0.6 L6.2 7.8 L0.6 4.2Z" fill="#8d8483"/></svg><svg style="left:585px;top:931px;" width="7" height="9" viewBox="0 0 7 9"><path d="M0.6 0.6 L0.6 7.8 L6.2 4.2Z" fill="#4d413f"/></svg><svg style="left:612px;top:931px;" width="8" height="9" viewBox="0 0 8 9"><rect x="6.2" y="0" width="1.3" height="8.4" fill="#4d413f"/><path d="M0.2 0.6 L0.2 7.8 L5.8 4.2Z" fill="#4d413f"/></svg><div style="left:613px;top:947px;width:4px;height:1px;background:#9a9a9a"></div><span class="t" style="left:1771.5px;top:923.00px;height:21px;line-height:21px;font-size:13px;color:#333;letter-spacing:0.169px;">1 - 30 of 61 items</span></body></html>
